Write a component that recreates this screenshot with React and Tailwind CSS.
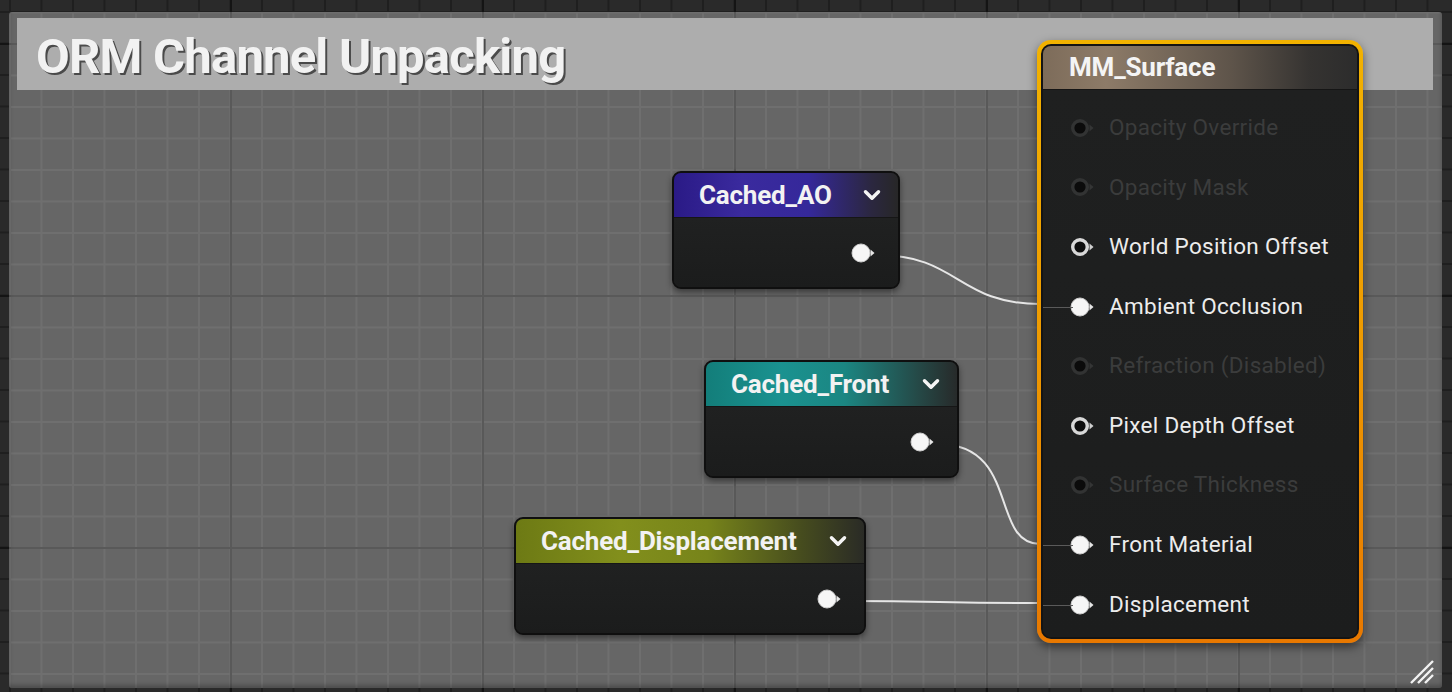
import { ChevronDown } from 'lucide-react';

const font = { fontFamily: 'Roboto, "Noto Sans", sans-serif' };

function Pin({ kind }) {
  // kind: connected | open | disabled
  if (kind === 'connected') {
    return (
      <svg width="28" height="22" viewBox="0 0 28 22" className="shrink-0">
        <circle cx="11" cy="11" r="9" fill="#f6f6f6" stroke="#cfcfcf" strokeWidth="1" />
        <path d="M20.5 7.5 L24.5 11 L20.5 14.5 Z" fill="#e6e6e6" />
      </svg>
    );
  }
  if (kind === 'open') {
    return (
      <svg width="28" height="22" viewBox="0 0 28 22" className="shrink-0">
        <circle cx="11" cy="11" r="7.3" fill="#0e0e0e" stroke="#d8d8d8" strokeWidth="3.4" />
        <path d="M20.5 7.5 L24.5 11 L20.5 14.5 Z" fill="#d0d0d0" />
      </svg>
    );
  }
  return (
    <svg width="28" height="22" viewBox="0 0 28 22" className="shrink-0">
      <circle cx="11" cy="11" r="7.3" fill="#0b0b0b" stroke="#323333" strokeWidth="3.4" />
      <path d="M20.5 7.5 L24.5 11 L20.5 14.5 Z" fill="#343535" />
    </svg>
  );
}

function VarNode({ title, header, className }) {
  return (
    <div className={`absolute flex flex-col rounded-[9px] border-2 border-[#0f0f0f] bg-[#1d1e1e] shadow-[0_3px_6px_rgba(0,0,0,0.45)] overflow-hidden ${className}`}>
      <div className={`h-[45px] flex items-center justify-between pl-[25px] pr-[13px] border-b border-[#161616] ${header}`}>
        <span className="text-[26px] font-bold text-[#f2f2f2] tracking-[-0.2px]">{title}</span>
        <ChevronDown size={26} strokeWidth={3.2} color="#f4f4f4" />
      </div>
      <div className="flex-1 flex items-center justify-end pr-[20px] bg-[linear-gradient(180deg,#202121,#1b1c1c)]">
        <Pin kind="connected" />
      </div>
    </div>
  );
}

const rows = [
  { label: 'Opacity Override', kind: 'disabled' },
  { label: 'Opacity Mask', kind: 'disabled' },
  { label: 'World Position Offset', kind: 'open' },
  { label: 'Ambient Occlusion', kind: 'connected' },
  { label: 'Refraction (Disabled)', kind: 'disabled' },
  { label: 'Pixel Depth Offset', kind: 'open' },
  { label: 'Surface Thickness', kind: 'disabled' },
  { label: 'Front Material', kind: 'connected' },
  { label: 'Displacement', kind: 'connected' },
];

function SurfaceNode() {
  return (
    <div className="absolute left-[1037px] top-[40px] w-[326px] h-[603px] rounded-[14px] p-[4px] bg-[linear-gradient(180deg,#f2b200,#ee9a00_50%,#e87800)] shadow-[0_4px_10px_rgba(0,0,0,0.5)]">
      <div className="h-full flex flex-col rounded-[10px] overflow-hidden border-2 border-[#141414] bg-[#1e1f1f]">
        <div className="h-[44px] shrink-0 flex items-center pl-[26px] bg-[linear-gradient(90deg,#7d6c5a,#8d7b68_20%,#5e544a_60%,#353331_85%,#2c2c2c)] border-b border-[#151515]">
          <span className="text-[26px] font-bold text-[#f4f4f4] tracking-[-0.2px]">MM_Surface</span>
        </div>
        <div className="flex-1 flex flex-col pt-[8px] bg-[linear-gradient(180deg,#1f2020,#1c1d1d)]">
          {rows.map((r) => (
            <div key={r.label} className="relative h-[59.6px] flex items-center pl-[26px] gap-[12px]">
              {r.kind === 'connected' && (
                <div className="absolute left-0 w-[30px] top-1/2 h-px bg-[#5a5a5a]" />
              )}
              <Pin kind={r.kind} />
              <span className={`text-[22.5px] tracking-[0.3px] ${r.kind === 'disabled' ? 'text-[#3b3c3c]' : 'text-[#ececec]'}`}>{r.label}</span>
            </div>
          ))}
        </div>
      </div>
    </div>
  );
}

export default function App() {
  return (
    <div
      style={font}
      className="relative w-[1452px] h-[692px] overflow-hidden bg-[#2a2a2a] bg-[image:linear-gradient(90deg,#141414_2px,transparent_2px),linear-gradient(180deg,#141414_2px,transparent_2px),linear-gradient(90deg,#1f1f1f_2px,transparent_2px),linear-gradient(180deg,#1f1f1f_2px,transparent_2px)] bg-[size:252px_252px,252px_252px,31.5px_31.5px,31.5px_31.5px] bg-[position:230px_0,0_43px,9px_0,0_11px]"
    >
      {/* comment box */}
      <div className="absolute left-[9px] top-[12px] w-[1433px] h-[676px] rounded-[3px] bg-[#666666] bg-[image:linear-gradient(90deg,#595959_2px,transparent_2px),linear-gradient(180deg,#595959_2px,transparent_2px),linear-gradient(90deg,#6f6f6f_2px,transparent_2px),linear-gradient(180deg,#6f6f6f_2px,transparent_2px)] bg-[size:252px_252px,252px_252px,31.5px_31.5px,31.5px_31.5px] bg-[position:221px_0,0_31px,0_0,0_31px] shadow-[inset_0_-3px_4px_rgba(0,0,0,0.25)]">
        <div className="ml-[8px] mt-[6px] mr-[9px] h-[72px] bg-[#adadad] flex items-center pl-[19px] pt-[6px]">
          <span className="text-[49px] font-bold text-[#f2f2f2] tracking-[-0.8px] [text-shadow:2px_2px_0_#4a4a4a]">ORM Channel Unpacking</span>
        </div>
        <svg className="absolute right-[7px] bottom-[3px]" width="28" height="28" viewBox="0 0 28 28">
          <path d="M26 4 L4 26 M26 11 L11 26 M26 18 L18 26" stroke="#f2f2f2" strokeWidth="2.4" />
        </svg>
      </div>

      {/* wires */}
      <svg className="absolute inset-0 pointer-events-none" width="1452" height="692">
        <g fill="none" stroke="#e6e6e6" strokeWidth="2">
          <path d="M878 255 C958 255 958 304 1040 304" />
          <path d="M938 444 C1020 444 990 544 1040 544" />
          <path d="M846 601 C940 601 940 603 1040 603" />
        </g>
      </svg>

      <VarNode
        title="Cached_AO"
        className="left-[672px] top-[171px] w-[228px] h-[118px]"
        header="bg-[linear-gradient(90deg,#2a1a86,#3a2a9e_30%,#35289a_60%,#2b2740_88%,#272727)]"
      />
      <VarNode
        title="Cached_Front"
        className="left-[704px] top-[360px] w-[255px] h-[118px]"
        header="bg-[linear-gradient(90deg,#137e7a,#1a9290_30%,#1b8682_55%,#254846_85%,#272a2a)]"
      />
      <VarNode
        title="Cached_Displacement"
        className="left-[514px] top-[517px] w-[352px] h-[118px]"
        header="bg-[linear-gradient(90deg,#6d7a14,#828f1c_30%,#77841a_55%,#464c1e_82%,#2a2b26)]"
      />

      <SurfaceNode />
    </div>
  );
}
